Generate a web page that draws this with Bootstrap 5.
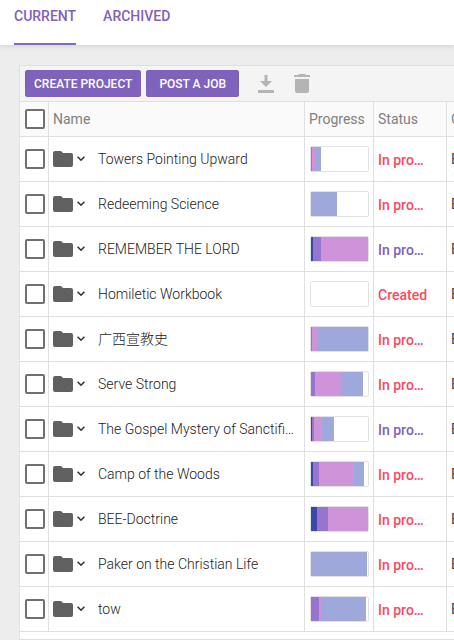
<!DOCTYPE html>
<html lang="en">
<head>
<meta charset="utf-8">
<meta name="viewport" content="width=device-width, initial-scale=1">
<title>Projects</title>
<link rel="stylesheet" href="https://cdn.jsdelivr.net/npm/bootstrap@5.3.0/dist/css/bootstrap.min.css">
<style>
body{background:#ededed;font-family:Roboto,"Noto Sans CJK SC",sans-serif;font-size:14px;line-height:20px;color:#444;overflow:hidden}
.top-tabs{background:#fff;height:46px;padding-left:14px;gap:27px;border-bottom:1px solid #dcdcdc}
.top-tabs .nav-link{height:45px;padding:6px 0 0;color:#7e62bb;font-weight:500;font-size:14px;line-height:20px}
.top-tabs .nav-link.active{border-bottom:2px solid #8467c2}
.panel{margin:19px 0 0 19px;border:1px solid #e0e0e0;border-right:0;background:#fff;min-height:calc(100vh - 65px)}
.tools{height:35px;background:#f4f4f4;padding-left:5px;gap:5px}
.btn-main{--bs-btn-bg:#7e62bb;--bs-btn-color:#fff;--bs-btn-border-color:#7e62bb;--bs-btn-hover-bg:#7055ad;--bs-btn-hover-color:#fff;font-weight:500;font-size:12px;line-height:18px;padding:4px 8px;height:27px;border-radius:2px}
.btn-main.wide{padding:4px 12px}
.tool-icon{width:20px;height:24px;margin-left:14px;color:#b4b4b4}
.tool-icon svg{display:block}
.tool-icon + .tool-icon{margin-left:11px}
.grid{table-layout:fixed;border-collapse:separate;border-spacing:0;width:100%;margin:0}
.grid th,.grid td{height:45px;padding:0 4px;border-bottom:1px solid #e0e0e0;border-left:1px solid #e0e0e0;vertical-align:middle;overflow:hidden;white-space:nowrap}
.grid th:first-child,.grid td:first-child{border-left:0}
.grid thead th{height:36px;background:#fafafa;color:#808080;font-weight:400;border-top:1px solid #e0e0e0}
.col-check{width:28px}.col-progress{width:69px}.col-status{width:73px}.col-next{width:8px}
.grid .form-check-input{display:block;width:20px;height:20px;margin:0 0 0 1px;border:2px solid #707070;border-radius:2px;background-color:#fff}
.folder-btn{padding:0;border:0;background:none;display:flex;align-items:center;color:#606060;flex:none;width:45px}
.project{font-weight:300;color:#222}
.meter{width:59px;height:26px;border:1px solid #e2e2e2;border-radius:2px;background:#fff;margin-left:1px}
.meter span{height:100%}
.s1{background:#3949ab}.s2{background:#9575cd}.s3{background:#ce93d8}.s4{background:#9fa8da}
.state{font-weight:500;color:#fb4a5d;padding-top:2px}
.state.calm{color:#7e62bb}
</style>
<script src="https://cdn.jsdelivr.net/npm/bootstrap@5.3.0/dist/js/bootstrap.bundle.min.js"></script>
</head>
<body>
<svg class="d-none" aria-hidden="true">
<symbol id="folder" viewBox="0 0 20 16"><path d="M2 0H8l2 2h8a2 2 0 0 1 2 2v10a2 2 0 0 1-2 2H2a2 2 0 0 1-2-2V2a2 2 0 0 1 2-2z" fill="currentColor"/></symbol>
<symbol id="chevron" viewBox="0 0 8 6"><path d="M.6.8L4 4.200 7.400.8" fill="none" stroke="#333" stroke-width="1.6"/></symbol>
</svg>
<nav class="nav top-tabs shadow-sm" aria-label="Projects">
<a class="nav-link active" href="#current" aria-current="page">CURRENT</a>
<a class="nav-link" href="#archived">ARCHIVED</a>
</nav>
<main class="panel">
<div class="tools d-flex align-items-center">
<button type="button" class="btn btn-main">CREATE PROJECT</button>
<button type="button" class="btn btn-main wide">POST A JOB</button>
<button type="button" class="btn p-0 border-0 tool-icon" aria-label="Download"><svg width="16" height="20" viewBox="0 0 16 20"><path d="M6.500 1h3v6H14l-6 6-6-6h4.500zM0 16h16v3H0z" fill="currentColor"/></svg></button>
<button type="button" class="btn p-0 border-0 tool-icon" aria-label="Delete"><svg width="16" height="20" viewBox="0 0 16 20"><path d="M1 5h14v12a2 2 0 0 1-2 2H3a2 2 0 0 1-2-2zM0 1h4l1-1h6l1 1h4v2H0z" fill="currentColor"/></svg></button>
</div>
<table class="grid">
<colgroup><col class="col-check"><col><col class="col-progress"><col class="col-status"><col class="col-next"></colgroup>
<thead><tr><th><input class="form-check-input" type="checkbox" aria-label="Select all"></th><th>Name</th><th>Progress</th><th>Status</th><th>C</th></tr></thead>
<tbody id="rows"></tbody>
</table>
</main>
<script>
// name, segment ends in 57ths of the meter, status, calm status colour
const projects=[
["Towers Pointing Upward",[0,1,4,10],"In progress",0],
["Redeeming Science",[0,0,0,26],"In progress",0],
["REMEMBER THE LORD",[2,10,57,57],"In progress",1],
["Homiletic Workbook",[0,0,0,0],"Created",0],
["广西宣教史",[0,1,6,57],"In progress",0],
["Serve Strong",[0,4,30,52],"In progress",0],
["The Gospel Mystery of Sanctification",[1,3,11,23],"In progress",1],
["Camp of the Woods",[2,8,43,53],"In progress",0],
["BEE-Doctrine",[6,17,57,57],"In progress",0],
["Paker on the Christian Life",[0,0,0,56],"In progress",0],
["tow",[0,8,10,55],"In progress",0]];
document.getElementById("rows").innerHTML=projects.map(([name,ends,status,calm])=>{
const bar=ends.map((e,i)=>`<span class="s${i+1}" style="width:${(e-(ends[i-1]||0))/57*100}%"></span>`).join("");
const label=status==="Created"?status:"In pro…";
return `<tr><td><input class="form-check-input" type="checkbox" aria-label="Select ${name}"></td>
<td><div class="d-flex align-items-center"><button type="button" class="folder-btn" aria-label="Open ${name}"><svg width="20" height="16"><use href="#folder"/></svg><svg class="ms-1" width="8" height="6"><use href="#chevron"/></svg></button><span class="project text-truncate">${name}</span></div></td>
<td><div class="meter d-flex" role="img" aria-label="Progress">${bar}</div></td>
<td><div class="state${calm?" calm":""}" title="${status}">${label}</div></td><td>E</td></tr>`;}).join("");
</script>
</body>
</html>
